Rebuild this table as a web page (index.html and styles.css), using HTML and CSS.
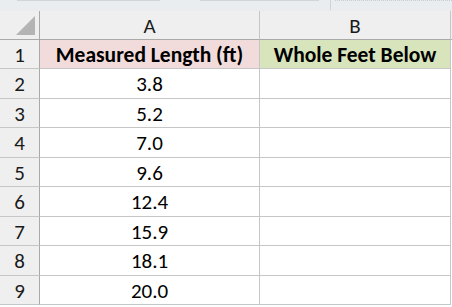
FILE: index.html
```html
<!DOCTYPE html>
<html>
<head>
<meta charset="utf-8">
<link rel="stylesheet" href="styles.css">
</head>
<body>
<div class="ribbon">
  <div class="rib-line l1"></div>
  <div class="rib-line l2"></div>
  <div class="rib-sep"></div>
  <div class="rib-dots"></div>
</div>
<div class="sheet">
  <div class="row head">
    <div class="cell rh corner"><span class="tri"></span></div>
    <div class="cell ca">A</div>
    <div class="cell cb">B</div>
    <div class="cell rest"></div>
  </div>
  <div class="row"><div class="cell rh">1</div><div class="cell ca bold pink">Measured Length (ft)</div><div class="cell cb bold green">Whole Feet Below</div><div class="cell rest"></div></div>
  <div class="row"><div class="cell rh">2</div><div class="cell ca">3.8</div><div class="cell cb"></div><div class="cell rest"></div></div>
  <div class="row"><div class="cell rh">3</div><div class="cell ca">5.2</div><div class="cell cb"></div><div class="cell rest"></div></div>
  <div class="row"><div class="cell rh">4</div><div class="cell ca">7.0</div><div class="cell cb"></div><div class="cell rest"></div></div>
  <div class="row"><div class="cell rh">5</div><div class="cell ca">9.6</div><div class="cell cb"></div><div class="cell rest"></div></div>
  <div class="row"><div class="cell rh">6</div><div class="cell ca">12.4</div><div class="cell cb"></div><div class="cell rest"></div></div>
  <div class="row"><div class="cell rh">7</div><div class="cell ca">15.9</div><div class="cell cb"></div><div class="cell rest"></div></div>
  <div class="row"><div class="cell rh">8</div><div class="cell ca">18.1</div><div class="cell cb"></div><div class="cell rest"></div></div>
  <div class="row"><div class="cell rh">9</div><div class="cell ca">20.0</div><div class="cell cb"></div><div class="cell rest"></div></div>
</div>
</body>
</html>
```
FILE: styles.css
```css
html, body {
  margin: 0;
  padding: 0;
  background: #ffffff;
  overflow: hidden;
}
body {
  width: 452px;
  height: 307px;
  font-family: Carlito, Lato, "Liberation Sans", sans-serif;
  color: #000;
}
.ribbon {
  position: relative;
  height: 11px;
  background: #e9edf0;
}
.rib-line {
  position: absolute;
  top: 0;
  height: 1px;
  background: #d2d5d8;
}
.l1 { left: 17px; width: 143px; }
.l2 { left: 200px; width: 119px; }
.rib-sep {
  position: absolute;
  left: 330px;
  top: 0;
  width: 1px;
  height: 10px;
  background: #d0d4d8;
}
.rib-dots {
  position: absolute;
  left: 335px;
  right: 0;
  top: 0;
  height: 1px;
  border-top: 1px dotted #c8ccd0;
}
.sheet {
  display: flex;
  flex-direction: column;
}
.row {
  display: flex;
  height: 29px;
}
.row:nth-child(odd) {
  height: 30px;
}
.row.head {
  height: 29px;
  background: #efefef;
}
.cell {
  box-sizing: border-box;
  height: 100%;
  display: flex;
  align-items: center;
  justify-content: center;
  border-right: 1px solid #c6c6c6;
  border-bottom: 1px solid #c6c6c6;
  font-size: 21px;
  padding-top: 1px;
}
.rh {
  width: 40px;
  background: #efefef;
  border-right-color: #a9a9a9;
  color: #1a1a1a;
}
.head .cell {
  border-bottom-color: #a9a9a9;
  color: #1a1a1a;
}
.ca { width: 220px; }
.cb { width: 191px; }
.rest { flex: 1; border-right: none; border-bottom: none; }
.head .rest { border-bottom: 1px solid #a9a9a9; }
.corner {
  position: relative;
}
.tri {
  position: absolute;
  right: 4px;
  bottom: 4px;
  width: 0;
  height: 0;
  border-left: 19px solid transparent;
  border-bottom: 19px solid #b4b4b4;
}
.bold { font-weight: bold; font-size: 21.5px; }
.pink { background: #f2dcdb; }
.green { background: #d8e4bc; }
```
